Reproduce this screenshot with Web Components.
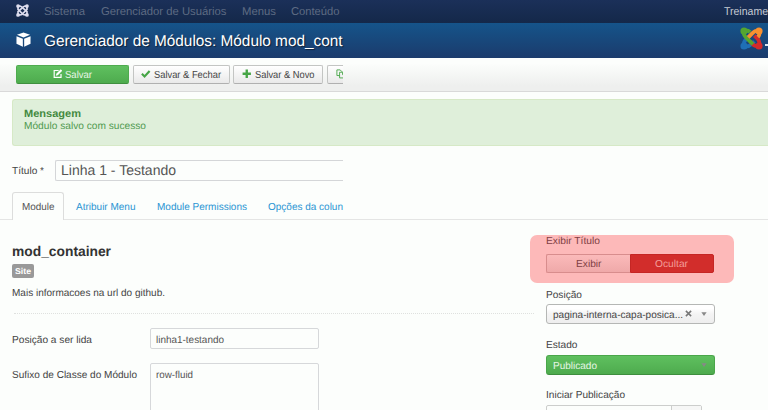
<!DOCTYPE html>
<html lang="pt-BR">
<head>
<meta charset="utf-8">
<title>Gerenciador de Módulos</title>
<style>
html,body{margin:0;height:410px;overflow:hidden;background:#fcfefc}
body{font:10.200px/12px "Liberation Sans",Arial,sans-serif;color:#444;text-rendering:geometricPrecision}
</style>
</head>
<body>
<module-page></module-page>
<script>
const define = (name, html, ready) => customElements.define(name, class extends HTMLElement {
  connectedCallback() {
    if (this.shadowRoot) return;
    const t = document.createElement('template');
    t.innerHTML = html;
    this.attachShadow({mode: 'open'}).append(t.content.cloneNode(true));
    if (ready) ready(this, this.shadowRoot);
  }
});

/* A line of text stretched to the width in the "w" attribute. */
define('ui-text', `<style>:host{display:block;white-space:nowrap;flex:none}span{display:inline-block;transform-origin:0 50%}</style><span><slot></slot></span>`, (el, root) => {
  const span = root.querySelector('span');
  const want = +el.getAttribute('w');
  if (want) {
    const natural = span.getBoundingClientRect().width;
    span.style.width = want + 'px';
    span.style.transform = `translateY(.7px) scaleX(${(want / natural).toFixed(4)})`;
  }
});

const shapes = {
  joomla: `<g fill="none" stroke="currentColor" stroke-width="2.100"><path d="M2.500 13.500V9.500L9 3.500l2-1h2.500"/><path d="M13.500 2.500v4L7 13l-2 .5H2.500"/><path d="M2.500 2.500v4L9 13l2 .5h2.500"/><path d="M13.500 13.500V9.500L7 3.500 5 2.500H2.500"/></g><g fill="currentColor"><circle cx="2.500" cy="2.500" r="2.300"/><circle cx="13.500" cy="2.500" r="2.300"/><circle cx="13.500" cy="13.500" r="2.300"/><circle cx="2.500" cy="13.500" r="2.300"/></g>`,
  brand: `<g fill="none" stroke-width="2.700"><path stroke="#1f6fb5" d="M2.500 13.500c0-3 .5-3.500 2-5l1.500-1.500M2.500 13.500c3 .5 4 0 5.500-1.500l2-2"/><path stroke="#d42a2a" d="M13.500 13.500c-3 0-3.500-.5-5-2L7 10M13.500 13.500c.5-3 0-4-1.500-5.500L10 6"/><path stroke="#55a630" d="M2.500 2.500c0 3 .5 3.500 2 5L9 12M2.500 2.500c2.500-.3 3.500 0 4.500 1"/><path stroke="#f9902e" d="M13.500 2.500c-3 0-3.500.5-5 2L5.700 7.300M13.500 2.500c.3 2.500 0 3.500-1 4.500"/></g><circle cx="2.800" cy="2.800" r="2.500" fill="#55a630"/><circle cx="13.200" cy="2.800" r="2.500" fill="#f9902e"/><circle cx="13.200" cy="13.200" r="2.500" fill="#d42a2a"/><circle cx="2.800" cy="13.200" r="2.500" fill="#1f6fb5"/>`,
  cube: `<g fill="currentColor"><path d="M8 .4 15 3 8 5.900 1 3z"/><path d="M.5 4.400 7.300 7.200V15.600L.5 12.400z"/><path d="M15.500 4.400 8.700 7.200V15.600l6.800-3.200z"/></g>`,
  edit: `<path fill="none" stroke="currentColor" stroke-width="2" d="M9.500 2.500H2v11.500h11.500V8.500"/><path fill="currentColor" d="M13 .5l2.500 2.500-7.500 7.500-3.200.8.800-3.200z"/>`,
  check: `<path fill="none" stroke="currentColor" stroke-width="3.600" d="M1.500 8l4.500 4.500L14.500 3.500"/>`,
  plus: `<path fill="currentColor" d="M6 1h4v5h5v4h-5v5H6v-5H1V6h5z"/>`,
  copy: `<path fill="none" stroke="currentColor" stroke-width="1.500" d="M6 11H1.500V1.500h5.500l3 3V5M6 5.500h5.500l3.500 3.500v6H6zM11 6v3.500h4"/>`,
  close: `<path fill="none" stroke="currentColor" stroke-width="3.500" d="M2 2l12 12M14 2L2 14"/>`,
  caret: `<path fill="currentColor" d="M1 3.500h14L8 13z"/>`
};
define('ui-icon', `<style>:host{display:block;flex:none}svg{display:block;width:100%;height:100%}</style><svg viewBox="0 0 16 16"></svg>`, (el, root) => {
  root.querySelector('svg').innerHTML = shapes[el.getAttribute('name')];
});

define('nav-bar', `<style>
:host{display:flex;box-sizing:border-box;height:23px;padding:4px 0 0 16px;background:linear-gradient(#1b3059,#142849);color:#5e6b83;font-size:11.400px;line-height:14px;overflow:hidden}
ui-icon{width:13px;height:13px;color:#dde;margin-right:15px}
ui-text{margin-right:15.500px}
.user{margin:0 0 0 auto;color:#c7ccd5}
</style><ui-icon name="joomla"></ui-icon><ui-text w="41">Sistema</ui-text><ui-text w="125.500">Gerenciador de Usuários</ui-text><ui-text w="34">Menus</ui-text><ui-text w="48.500">Conteúdo</ui-text><ui-text class="user" w="44">Treiname</ui-text>`);

define('title-bar', `<style>
:host{display:flex;box-sizing:border-box;height:35px;padding:9px 0 0 16px;background:linear-gradient(#15548a,#1b3b6c);color:#fff;font-size:15.600px;line-height:18px;overflow:hidden}
.cube{width:15px;height:15px;margin:0 13px 0 0}
ui-text{text-shadow:1px 1px 1px #0008}
.brand{width:23px;height:23px;margin:-5px 2px 0 auto}
i{width:3px;height:1.500px;background:#dbe6f0;margin-top:12px}
</style><ui-icon class="cube" name="cube"></ui-icon><ui-text w="298.500">Gerenciador de Módulos: Módulo mod_cont</ui-text><ui-icon class="brand" name="brand"></ui-icon><i></i>`);

define('tool-button', `<style>
:host{display:flex;box-sizing:border-box;height:19px;align-items:center;justify-content:center;gap:3px;border:1px solid #c3c5c3;border-bottom-color:#b0b0b0;border-radius:2px;background:linear-gradient(#fff,#e9e9e9);color:#444;flex:none}
:host([primary]){background:linear-gradient(#5fc05f,#4eab4e);border-color:#4eab4e #4eab4e #3f8f3f;color:#e9f6e9}
:host([cut]){border-right:0;border-radius:2px 0 0 2px;justify-content:flex-start;padding-left:8px;overflow:hidden}
ui-icon{width:9.500px;height:9.500px;color:#46a546;margin-top:-1px}
:host([primary]) ui-icon{color:#fff}
</style><ui-icon></ui-icon><slot></slot>`, (el, root) => {
  const icon = document.createElement('ui-icon');
  icon.setAttribute('name', el.getAttribute('icon'));
  root.querySelector('ui-icon').replaceWith(icon);
});

define('tool-bar', `<style>
:host{display:flex;box-sizing:border-box;height:34px;padding:7px 0 0 16px;gap:3.500px;background:linear-gradient(#fcfefc 15%,#eeefee 85%);border-bottom:1px solid #d9d9d9}
</style>
<tool-button primary icon="edit" style="width:113px"><ui-text w="27">Salvar</ui-text></tool-button>
<tool-button icon="check" style="width:97px"><ui-text w="67">Salvar &amp; Fechar</ui-text></tool-button>
<tool-button icon="plus" style="width:90px"><ui-text w="59.500">Salvar &amp; Novo</ui-text></tool-button>
<tool-button cut icon="copy" style="width:16px"></tool-button>`);

define('system-message', `<style>
:host{display:block;box-sizing:border-box;height:47px;margin:7px 0 0 12px;padding:7px 11px;background:#dfefda;border:1px solid #d6e9c6;border-right:0;border-radius:3px 0 0 3px;color:#4f9a50}
.head{font-weight:bold;font-size:10.700px;line-height:13px;color:#43893f}
</style><ui-text class="head" w="57">Mensagem</ui-text><ui-text w="122">Módulo salvo com sucesso</ui-text>`);

define('title-field', `<style>
:host{display:flex;height:21px;margin:14px 0 0 12px;width:331px}
.label{width:43px;padding-top:5px}
.box{flex:1;box-sizing:border-box;border:1px solid #d4d6d8;border-right:0;border-radius:2px 0 0 2px;padding:1px 0 0 5px;font-size:14.200px;line-height:17px;color:#555}
</style><ui-text class="label" w="32">Título *</ui-text><div class="box"><ui-text w="115">Linha 1 - Testando</ui-text></div>`);

define('tab-strip', `<style>
:host{display:flex;box-sizing:border-box;height:28px;margin-top:11px;padding-left:12px;border-bottom:1px solid #e4e5e4;color:#2a95d3}
.on{box-sizing:border-box;width:52px;height:28px;border:1px solid #dcdddc;border-bottom:0;border-radius:3px 3px 0 0;background:#fcfefc;color:#555;padding:8px 0 0 9px;margin-right:12px}
.tab{padding-top:9px;margin-right:21px}
</style><div class="on"><ui-text w="32.500">Module</ui-text></div><ui-text class="tab" w="59.500">Atribuir Menu</ui-text><ui-text class="tab" w="90">Module Permissions</ui-text><ui-text class="tab" w="75">Opções da colun</ui-text>`);

define('text-field', `<style>
:host{display:flex;height:21px;margin-bottom:14px}
:host([tall]){height:60px}
.label{width:138px;padding-top:6px}
.box{box-sizing:border-box;width:169px;border:1px solid #d6d8da;border-radius:2px;padding:5px 0 0 4.500px;color:#555}
</style><div class="label"><slot name="label"></slot></div><div class="box"><slot></slot></div>`);

define('module-details', `<style>
:host{display:block;width:522px}
.name{font-size:14px;line-height:16px;font-weight:bold;color:#333}
.badge{display:block;box-sizing:border-box;width:22px;height:14px;margin-top:6px;padding:0 0 0 3px;background:#999;border-radius:2px;color:#fff;font-size:8.500px;font-weight:bold}
.info{margin-top:9px}
hr{border:0;border-top:1px dotted #dfe1df;margin:14px 0 14px 2px}
</style>
<ui-text class="name" w="99">mod_container</ui-text>
<div class="badge"><ui-text w="16">Site</ui-text></div>
<ui-text class="info" w="153">Mais informacoes na url do github.</ui-text>
<hr>
<text-field><ui-text slot="label" w="80">Posição a ser lida</ui-text><ui-text w="68">linha1-testando</ui-text></text-field>
<text-field tall><ui-text slot="label" w="125">Sufixo de Classe do Módulo</ui-text><ui-text w="37">row-fluid</ui-text></text-field>`);

define('toggle-panel', `<style>
:host{display:block;box-sizing:border-box;width:204px;height:48px;margin-left:-4px;padding:0 0 0 16px;background:#fdb9b9;border-radius:7px;color:#803e44}
.pair{display:flex;width:168px;height:19px;margin-top:7px}
.pair div{flex:1;box-sizing:border-box;display:flex;justify-content:center;padding-top:3px;border:1px solid #d88d8d;border-right:0;border-radius:2px 0 0 2px;background:linear-gradient(#fbbaba,#efa9a9)}
.pair .on{background:#d22d2b;border:1px solid #c52624;border-radius:0 2px 2px 0;color:#f29c98}
</style><ui-text w="54">Exibir Título</ui-text><div class="pair"><div><ui-text w="25.500">Exibir</ui-text></div><div class="on"><ui-text w="33">Ocultar</ui-text></div></div>`);

define('select-box', `<style>
:host{display:flex;box-sizing:border-box;width:169px;height:20px;align-items:center;padding:0 7px 0 6px;border:1px solid #b5b7b5;border-radius:3px;background:linear-gradient(#fff 20%,#f4f4f4 50%,#eee);color:#444}
:host([green]){background:linear-gradient(#5fc05f,#4eab4e);border-color:#4aa64a;border-bottom-color:#3e8e3e;color:#e6f6e6}
.arrow{width:6px;height:6px;color:#888;margin:-1px 0 0 auto}
</style><slot></slot><ui-icon class="arrow" name="caret"></ui-icon>`);

define('module-options', `<style>
:host{display:block;flex:none;width:234px}
.col{padding-left:12px}
.l1{margin-top:6px}.l2{margin-top:15px}.l3{margin-top:14px}
select-box{margin-top:3px}
select-box[green]{margin-top:4px}
.txt{margin-top:1px}
.x{width:7px;height:7px;color:#777;margin:-1px 0 0 2px}
.date{display:flex;margin-top:4px;height:20px;width:156px;box-sizing:border-box;border:1px solid #cccecc;border-radius:2px}
.date i{margin-left:124px;border-left:1px solid #cccecc;flex:1;background:#f6f7f6}
</style>
<toggle-panel></toggle-panel>
<div class="col">
<ui-text class="l1" w="36">Posição</ui-text>
<select-box><ui-text class="txt" w="130">pagina-interna-capa-posica...</ui-text><ui-icon class="x" name="close"></ui-icon></select-box>
<ui-text class="l2" w="31.500">Estado</ui-text>
<select-box green><ui-text class="txt" w="44">Publicado</ui-text></select-box>
<ui-text class="l3" w="79">Iniciar Publicação</ui-text>
<div class="date"><i></i></div>
</div>`);

define('module-page', `<style>
:host{display:block;width:768px;height:410px;overflow:hidden}
main{display:flex;align-items:flex-start}
module-details{padding:22px 0 0 12px}
module-options{margin-top:15px}
</style>
<nav-bar></nav-bar><title-bar></title-bar><tool-bar></tool-bar><system-message></system-message><title-field></title-field><tab-strip></tab-strip>
<main><module-details></module-details><module-options></module-options></main>`);
</script>
</body>
</html>
